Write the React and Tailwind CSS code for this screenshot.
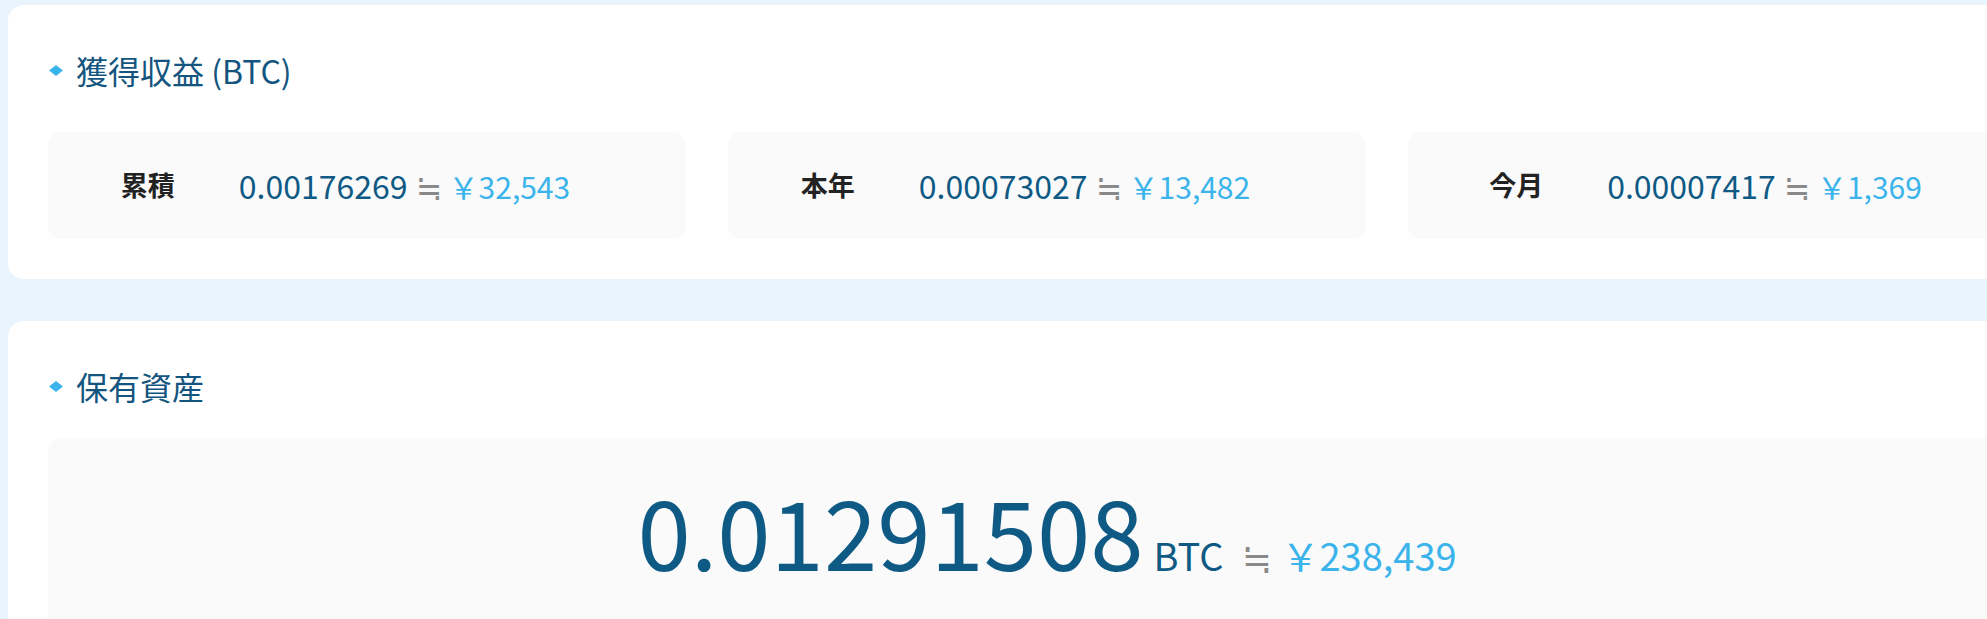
import React from "react";

const FONT = { fontFamily: '"Noto Sans CJK JP", "Noto Sans", sans-serif' };

function Diamond() {
  return (
    <svg width="14" height="11" viewBox="0 0 14 11" className="ml-px shrink-0">
      <polygon points="7,0 14,5.5 7,11 0,5.5" fill="#3bb4ec" />
    </svg>
  );
}

function Title({ children }) {
  return (
    <div className="flex items-center h-[48px]">
      <Diamond />
      <span className="ml-[13px] text-[32px] leading-[48px] text-[#14557f]">{children}</span>
    </div>
  );
}

function Approx({ className }) {
  return (
    <span className={"inline-block scale-y-[1.15] text-[#8a8a8a] " + className}>≒</span>
  );
}

function Stat({ label, value, yen }) {
  return (
    <div className="h-[107px] rounded-[14px] bg-[#fafafa] flex items-center justify-center pr-[66px]">
      <div className="w-[100px] text-center text-[27px] font-bold text-[#222222]">{label}</div>
      <div className="ml-[41px] flex items-baseline whitespace-nowrap">
        <span className="text-[32px] text-[#0f5a85]">{value}</span>
        <Approx className="ml-[8px] mr-[7px] text-[31px]" />
        <span className="text-[30px] text-[#3bb4ec]">￥{yen}</span>
      </div>
    </div>
  );
}

export default function App() {
  return (
    <div className="h-screen w-screen overflow-hidden bg-[#eaf4fc]" style={FONT}>
      <div className="w-[2098px] pl-2 pt-[5px]">
        <section className="bg-white rounded-[16px] px-10 pt-[41px] pb-10">
          <Title>獲得収益 (BTC)</Title>
          <div className="mt-[38px] grid grid-cols-[638px_638px_638px] gap-[42px]">
            <Stat label="累積" value="0.00176269" yen="32,543" />
            <Stat label="本年" value="0.00073027" yen="13,482" />
            <Stat label="今月" value="0.00007417" yen="1,369" />
          </div>
        </section>
        <section className="mt-[42px] bg-white rounded-[16px] px-10 pt-[41px] pb-10">
          <Title>保有資産</Title>
          <div className="mt-[28px] h-[260px] rounded-[14px] bg-[#fafafa] pt-[44px] pr-[12px] flex justify-center">
            <div className="flex items-baseline whitespace-nowrap">
              <span className="text-[96px] leading-[96px] text-[#0f5a85]">0.01291508</span>
              <span className="ml-[10px] text-[38px] text-[#0f5a85]">BTC</span>
              <Approx className="ml-[18px] mr-[10px] text-[36px]" />
              <span className="text-[38px] text-[#3bb4ec]">￥238,439</span>
            </div>
          </div>
        </section>
      </div>
    </div>
  );
}
